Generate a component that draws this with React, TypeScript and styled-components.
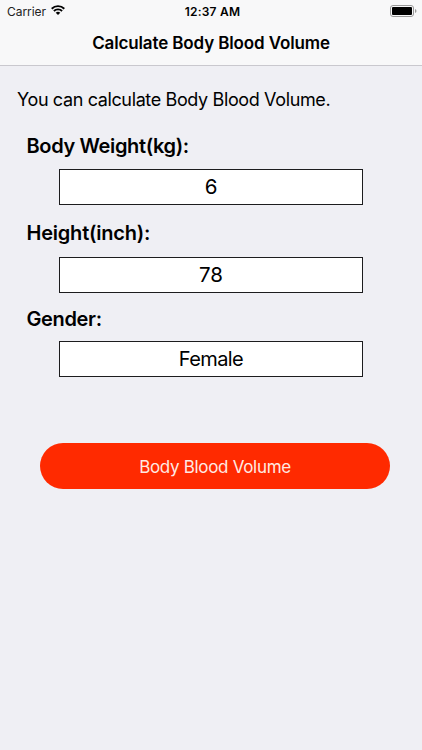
import React from "react";
import styled, { createGlobalStyle } from "styled-components";

const Global = createGlobalStyle`
  * { box-sizing: border-box; }
  body { margin: 0; background: #efeff4; font-family: Inter, "Liberation Sans", sans-serif; color: #000; }
`;
const Screen = styled.div`
  height: 750px; width: 422px; background: #efeff4; overflow: hidden;
`;
const Header = styled.header`
  height: 66px; background: #f8f8f9; border-bottom: 1px solid #c9c8ce;
`;
const StatusBar = styled.div`
  height: 22px; display: grid; grid-template-columns: 1fr auto 1fr; align-items: center;
  padding: 0 5px 0 7px; font-size: 12px;
`;
const Carrier = styled.div`
  display: flex; align-items: center; gap: 5px; letter-spacing: -0.06px; color: #222;
`;
const Wifi = styled.svg` margin-bottom: 2px; `;
const Time = styled.span` font-weight: 600; letter-spacing: 0.2px; padding-left: 1px; `;
const Battery = styled.svg` justify-self: end; margin: 0 0 1px; `;
const Title = styled.h1`
  margin: 0; height: 43px; line-height: 43px; text-align: center; font-size: 17px; font-weight: 600;
  letter-spacing: -0.13px;
`;
const Intro = styled.p`
  margin: 0 0 0 17px; padding-top: 22px; font-size: 18px; line-height: 24px; letter-spacing: -0.37px;
`;
const Label = styled.label<{ $top: number; $spacing?: number }>`
  display: block; margin: ${p => p.$top}px 0 0 26.5px; font-size: 20px; line-height: 24px; font-weight: 600;
  letter-spacing: ${p => p.$spacing ?? -0.36}px;
`;
const Field = styled.div<{ $top: number; $numeric?: boolean }>`
  margin: ${p => p.$top}px 59px 0; height: 36px; line-height: 34px; border: 1px solid #1c1c1e;
  background: #fff; text-align: center; font-size: ${p => (p.$numeric ? 20.5 : 20)}px;
  letter-spacing: ${p => (p.$numeric ? 0 : -0.6)}px;
`;
const Button = styled.button`
  display: block; margin: 66px 0 0 40px; padding: 2px 0 0; width: 350px; height: 46px; border: 0;
  border-radius: 23px; background: #ff2a00; color: #ffe9e2; font-family: inherit; font-size: 17px;
  letter-spacing: -0.31px;
`;

export default function App() {
  return (
    <Screen>
      <Global />
      <Header>
        <StatusBar>
          <Carrier>Carrier
            <Wifi width="14" height="10" viewBox="0 0 14 10" fill="none" stroke="#000" strokeWidth="1.9">
              <path d="M.7 3.7a9 9 0 0 1 12.6 0M2.9 6a5.9 5.9 0 0 1 8.2 0" />
              <path d="M7 10 4.7 7.7a3.4 3.4 0 0 1 4.6 0z" fill="#000" stroke="none" />
            </Wifi>
          </Carrier>
          <Time>12:37 AM</Time>
          <Battery width="27" height="12" viewBox="0 0 27 12">
            <rect x=".5" y=".5" width="23" height="11" rx="2.5" fill="none" stroke="#999" />
            <rect x="2" y="2" width="20" height="8" rx="1" />
            <path d="M25 4v4q1.5-.5 1.5-2T25 4" fill="#999" />
          </Battery>
        </StatusBar>
        <Title>Calculate Body Blood Volume</Title>
      </Header>
      <main>
        <Intro>You can calculate Body Blood Volume.</Intro>
        <Label $top={22}>Body Weight(kg):</Label>
        <Field $top={11} $numeric>6</Field>
        <Label $top={16} $spacing={-0.22}>Height(inch):</Label>
        <Field $top={12} $numeric>78</Field>
        <Label $top={14}>Gender:</Label>
        <Field $top={10}>Female</Field>
        <Button>Body Blood Volume</Button>
      </main>
    </Screen>
  );
}
